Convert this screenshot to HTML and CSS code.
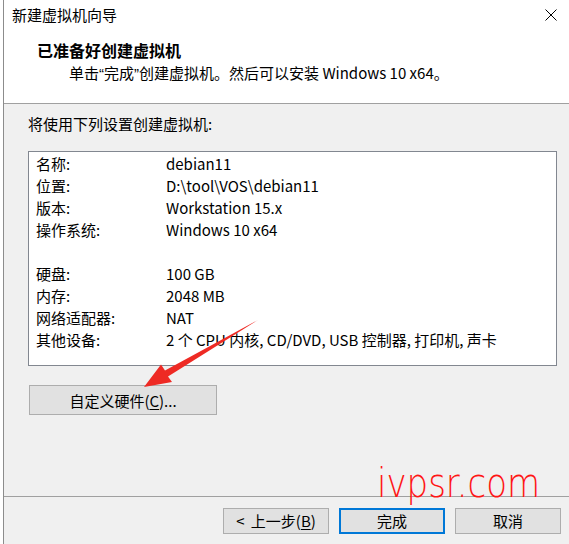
FILE: index.html
```html
<!DOCTYPE html>
<html lang="zh-CN">
<head>
<meta charset="utf-8">
<title>新建虚拟机向导</title>
<link rel="stylesheet" href="styles.css">
</head>
<body>
<div class="window">
  <div class="top">
    <div class="titlebar">
      <span class="title">新建虚拟机向导</span>
      <svg class="close" width="12" height="12" viewBox="0 0 12 12"><path d="M0.5 0.5 L11.5 11.5 M11.5 0.5 L0.5 11.5" stroke="#000" stroke-width="1" fill="none"/></svg>
    </div>
    <div class="header">
      <div class="heading">已准备好创建虚拟机</div>
      <div class="subtitle">单击<span class="q">“</span>完成<span class="q">”</span>创建虚拟机。然后可以安装 Windows 10 x64。</div>
    </div>
  </div>
  <div class="main">
    <div class="intro">将使用下列设置创建虚拟机:</div>
    <div class="summary">
      <div class="row"><span class="label">名称:</span><span>debian11</span></div>
      <div class="row"><span class="label">位置:</span><span>D:\tool\VOS\debian11</span></div>
      <div class="row"><span class="label">版本:</span><span>Workstation 15.x</span></div>
      <div class="row"><span class="label">操作系统:</span><span>Windows 10 x64</span></div>
      <div class="row"></div>
      <div class="row"><span class="label">硬盘:</span><span>100 GB</span></div>
      <div class="row"><span class="label">内存:</span><span>2048 MB</span></div>
      <div class="row"><span class="label">网络适配器:</span><span>NAT</span></div>
      <div class="row"><span class="label">其他设备:</span><span>2 个 CPU 内核, CD/DVD, USB 控制器, 打印机, 声卡</span></div>
    </div>
    <button class="btn custom">自定义硬件(<u>C</u>)...</button>
    <svg class="arrow" width="569" height="544" viewBox="0 0 569 544"><polygon points="144,387 172,382 168,376.5 258,320 165,370.5 161,364.5" fill="#ee2a24"/></svg>
  </div>
  <div class="footer">
    <button class="btn">&lt; 上一步(<u>B</u>)</button>
    <button class="btn primary">完成</button>
    <button class="btn">取消</button>
  </div>
  <div class="watermark">ivpsr.com</div>
</div>
</body>
</html>
```
FILE: styles.css
```css
* { box-sizing: border-box; }
html, body { margin: 0; padding: 0; }
body {
  width: 569px;
  height: 544px;
  overflow: hidden;
  background: #ffffff;
  padding-left: 3px;
  font-family: "Noto Sans CJK SC", "Noto Sans", sans-serif;
  font-size: 15px;
  color: #000;
}
.window {
  position: relative;
  height: 544px;
  border-left: 1px solid #8c8c8c;
  background: #f0f0f0;
}
.top {
  background: #fff;
  border-bottom: 1px solid #a0a0a0;
  height: 104px;
}
.titlebar {
  height: 29px;
  display: flex;
  align-items: center;
  justify-content: space-between;
  padding: 0 12px 0 8px;
}
.title { font-size: 15px; line-height: 29px; }
.close { display: block; margin-top: 0; }
.header { padding: 10px 0 0 33px; }
.heading { font-weight: bold; font-size: 16px; line-height: 23px; }
.subtitle { line-height: 22px; padding-left: 32px; }
.q { font-family: "Liberation Sans", sans-serif; }
.main {
  position: relative;
  height: 392px;
  padding: 9px 12px 0 24px;
}
.intro { line-height: 22px; }
.summary {
  margin-top: 16px;
  background: #fff;
  border: 1px solid #828790;
  padding: 1px 0 14px 7px;
}
.row { display: flex; height: 22px; line-height: 22px; white-space: nowrap; }
.label { width: 130px; flex: none; }
.btn {
  font-family: inherit;
  font-size: 15px;
  color: #000;
  background: #e1e1e1;
  border: 1px solid #adadad;
  border-radius: 0;
  padding: 0;
  margin: 0;
}
.btn u { text-underline-offset: 2px; }
.custom {
  display: block;
  margin-top: 19px;
  margin-left: 1px;
  width: 188px;
  height: 30px;
}
.arrow { position: absolute; left: -4px; top: -104px; pointer-events: none; }
.footer {
  border-top: 1px solid #a0a0a0;
  display: flex;
  gap: 10px;
  justify-content: flex-end;
  padding: 11px 8px 0 0;
}
.footer .btn { width: 106px; height: 26px; line-height: 22px; word-spacing: 3px; }
.footer .primary { border: 2px solid #0078d7; }
.watermark {
  position: absolute;
  left: 373px;
  top: 461px;
  font-family: "DejaVu Sans", sans-serif;
  font-weight: 200;
  font-size: 40px;
  color: #ff1515;
  line-height: 44px;
  transform: scale(0.85, 1.0);
  transform-origin: left top;
}
```
